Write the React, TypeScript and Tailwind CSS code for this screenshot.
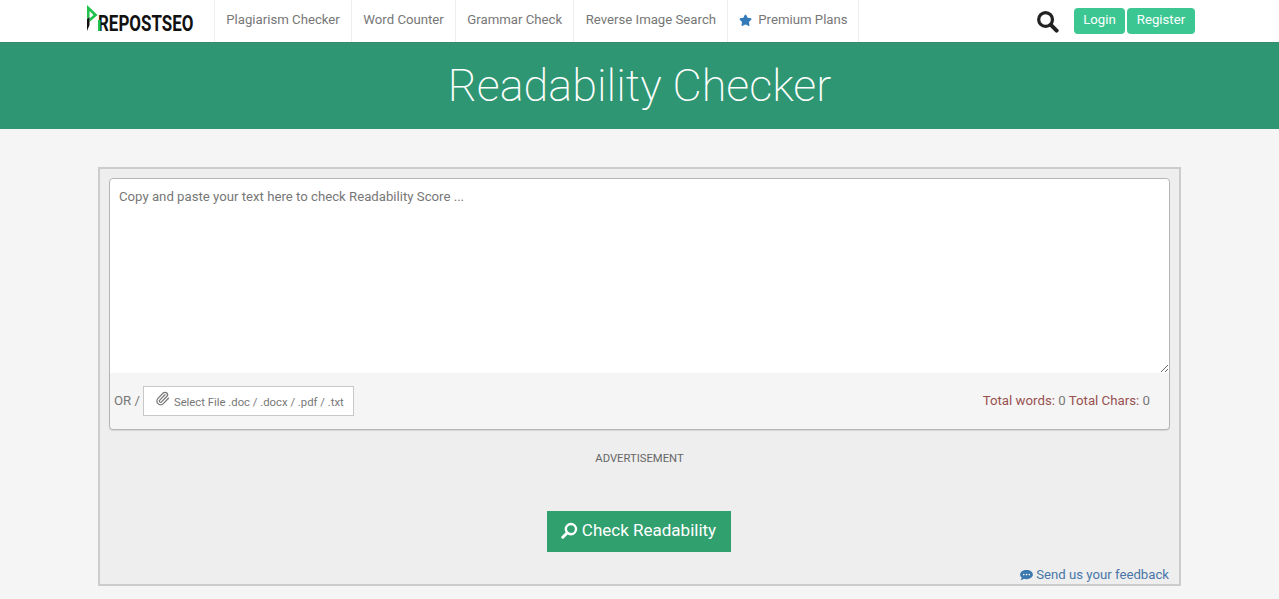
import { Star, Paperclip } from 'lucide-react'

const navItems = ['Plagiarism Checker', 'Word Counter', 'Grammar Check', 'Reverse Image Search']

function SearchIcon({ className }: { className?: string }) {
    return (
        <svg viewBox="0 0 24 24" fill="none" stroke="currentColor" strokeLinecap="round" className={className}>
            <circle cx="10" cy="10" r="7.2" strokeWidth="3.4" />
            <path d="M15.8 15.8 L21.5 21.500" strokeWidth="4.200" />
        </svg>
    )
}

function Logo() {
    return (
        <div className="flex items-end h-[42px] w-[128px] pl-[10px] pb-[10px]">
            <svg width="15" height="27" viewBox="0 0 15 27" className="shrink-0 -mr-[3px] relative z-10">
                <path d="M1 0 L11.500 10 L3.500 17 L3.500 13.500 L7.500 10 L3.500 6 L3.500 12 L1 14 Z" fill="#1fc24a" />
                <path d="M1 14 L3.500 12 L3.500 20 L1 26 Z" fill="#111" />
                <path d="M12 15 H14.500 V26 H12 Z" fill="#1fc24a" />
            </svg>
            <span className="font-['Roboto',sans-serif] font-bold text-[22px] leading-[17px] text-[#111] scale-x-[0.77] origin-left whitespace-nowrap">
                REPOSTSEO
            </span>
        </div>
    )
}

export default function App() {
    return (
        <div className="min-h-[599px] bg-[#f5f5f5] font-['Roboto',sans-serif] overflow-hidden">
            <header className="h-[42px] bg-white flex pl-[76px] pr-[84px]">
                <div className="w-[138px] shrink-0"><Logo /></div>
                <nav className="flex h-[42px] border-l border-[#eeeeee]">
                    {navItems.map((item) => (
                        <a key={item} className="flex items-center px-[11.250px] pb-[2px] text-[13.200px] text-[#777] border-r border-[#eeeeee]">
                            {item}
                        </a>
                    ))}
                    <a className="flex items-center pl-[11px] pr-[10px] pb-[2px] text-[13.200px] text-[#777] border-r border-[#eeeeee]">
                        <Star className="w-[13px] h-[13px] mr-[6px] text-[#337ab7]" fill="#337ab7" />
                        Premium Plans
                    </a>
                </nav>
                <div className="ml-auto flex items-center">
                    <SearchIcon className="w-[23px] h-[23px] text-[#222] mr-[15px]" />
                    <button className="h-[26px] w-[51px] rounded-[4px] bg-[#3cc692] text-white text-[13.200px] pb-[2px]">Login</button>
                    <button className="h-[26px] w-[68px] ml-[2px] rounded-[4px] bg-[#3cc692] text-white text-[13.200px] pb-[2px]">Register</button>
                </div>
            </header>

            <div className="h-[87px] bg-[#2e9672] border-t border-[#3a8a6e] flex items-center justify-center">
                <h1 className="text-[45px] font-extralight text-white">Readability Checker</h1>
            </div>

            <main className="mt-[38px] ml-[98px] w-[1083px] h-[419px] border-2 border-[#cccccc] bg-[#eeeeee] px-[9px] pt-[9px] relative">
                <div className="h-[252px] border border-[#b5b5b5] rounded-[4px] bg-[#f5f5f5] shadow-[0_1px_1px_rgba(0,0,0,0.1)]">
                    <textarea
                        className="block w-full h-[194px] bg-white rounded-t-[4px] px-[9px] py-[8px] text-[13.200px] leading-[20px] text-[#777] placeholder:text-[#777] outline-none"
                        placeholder="Copy and paste your text here to check Readability Score ..."
                    />
                    <div className="flex items-center justify-between h-[55px] pl-[4px] pr-[19px]">
                        <div className="flex items-center text-[13.200px] text-[#777]">
                            <span>OR /</span>
                            <div className="ml-[3px] h-[30px] w-[211px] bg-white border border-[#c8c8c8] flex items-center pl-[11px] text-[11.300px] text-[#777] whitespace-nowrap">
                                <Paperclip className="w-[15px] h-[15px] mr-[4px] -mt-[4px]" />
                                <span className="mt-[5px]">Select File .doc / .docx / .pdf / .txt</span>
                            </div>
                        </div>
                        <div className="text-[13.250px] text-[#777]">
                            <span className="text-[#985050]">Total words:</span> 0 <span className="text-[#985050]">Total Chars:</span> 0
                        </div>
                    </div>
                </div>

                <p className="mt-[22px] text-center text-[11.250px] leading-[14px] text-[#666]">ADVERTISEMENT</p>

                <div className="mt-[45px] flex justify-center pr-[2px]">
                    <button className="h-[41px] w-[184px] bg-[#31a06f] text-white text-[17px] pb-[2px] flex items-center justify-center">
                        <SearchIcon className="w-[17px] h-[17px] mr-[4px] -scale-x-100" />
                        Check Readability
                    </button>
                </div>

                <a className="absolute right-[10px] -bottom-[1px] flex items-center text-[13.200px] text-[#4a76a8]">
                    <svg width="13" height="11" viewBox="0 0 14 12" className="mr-[3px]">
                        <path d="M7 0C3.100 0 0 2.200 0 5c0 1.300.7 2.500 1.800 3.400-.2.9-.7 1.800-1.400 2.600 1.400-.1 2.700-.6 3.700-1.400C5 9.900 6 10 7 10c3.900 0 7-2.200 7-5S10.900 0 7 0z" fill="#3b78b0" />
                        <circle cx="4" cy="5" r="0.9" fill="#fff" />
                        <circle cx="7" cy="5" r="0.9" fill="#fff" />
                        <circle cx="10" cy="5" r="0.9" fill="#fff" />
                    </svg>
                    Send us your feedback
                </a>
            </main>
        </div>
    )
}
